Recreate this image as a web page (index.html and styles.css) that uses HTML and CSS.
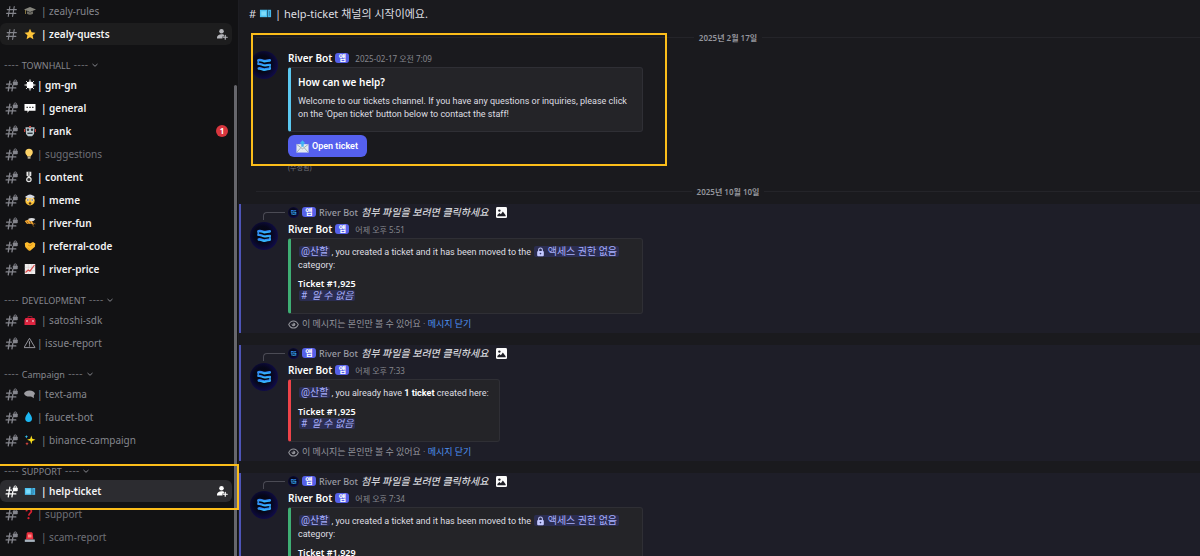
FILE: index.html
```
<!DOCTYPE html>
<html lang="ko">
<head>
    <meta charset="UTF-8">
    <meta name="viewport" content="width=device-width, initial-scale=1.0">
    <title>help-ticket</title>
    <link rel="stylesheet" href="styles.css">
</head>
<body>
    <!-- shared icons -->
    <svg class="sprite" aria-hidden="true">
        <defs>
            <radialGradient id="avatarBg" cx="45%" cy="45%" r="60%">
                <stop offset="0" stop-color="#04050f"/>
                <stop offset="0.5" stop-color="#06071a"/>
                <stop offset="1" stop-color="#110c50"/>
            </radialGradient>
            <linearGradient id="wave" x1="0" y1="0" x2="0" y2="1">
                <stop offset="0" stop-color="#2f86f5"/>
                <stop offset="1" stop-color="#35b4fb"/>
            </linearGradient>
        </defs>
        <symbol id="hash" viewBox="0 0 24 24">
            <path d="M9 3 6 21M17 3l-3 18M4 8.500h17M3 15.500h17" fill="none" stroke="currentColor" stroke-width="2" stroke-linecap="round"/>
        </symbol>
        <symbol id="hash-lock" viewBox="0 0 24 24">
            <path d="M9 4 6 22M14.500 12l-1.700 10M3 9.500h9M2 16.500h18" fill="none" stroke="currentColor" stroke-width="2.400" stroke-linecap="round"/>
            <rect x="14.500" y="4.500" width="9" height="7" rx="1.500" fill="currentColor"/>
            <path d="M16.800 5V3.800a2.200 2.200 0 0 1 4.400 0V5" fill="none" stroke="currentColor" stroke-width="1.600"/>
        </symbol>
        <symbol id="add-user" viewBox="0 0 24 24">
            <circle cx="11" cy="6.500" r="4.500" fill="currentColor"/>
            <path d="M2 21v-2c0-4 4-6.500 9-6.500 1.800 0 3.500.3 4.900 1v3.300h-3V21z" fill="currentColor"/>
            <path d="M18.500 14.500v8M14.500 18.500h8" stroke="currentColor" stroke-width="2.400" stroke-linecap="round"/>
        </symbol>
        <symbol id="chevron" viewBox="0 0 8 8">
            <path d="M1.500 3 4 5.300 6.500 3" fill="none" stroke="currentColor" stroke-width="1"/>
        </symbol>
        <symbol id="avatar" viewBox="0 0 28 28">
            <circle cx="14" cy="14" r="14" fill="url(#avatarBg)"/>
            <g fill="none" stroke="url(#wave)" stroke-linecap="round">
                <path d="M8.500 9.200c2-.8 3.600.2 5.300.8 2 .6 4-.9 6-.6" stroke-width="2.600"/>
                <path d="M8.300 13c2.200-.6 3.400.8 5.400 1.300 2.200.5 4.200-.8 6.300-.4" stroke-width="2.200"/>
                <path d="M8.800 17.500c2-.6 3.300.9 5.200 1.100 2 .2 4-1 5.800-1" stroke-width="2.600"/>
                <path d="M8.200 9.500v3.300M20 14v3.500" stroke-width="1.400"/>
            </g>
        </symbol>
        <symbol id="photo" viewBox="0 0 12 12">
            <rect width="12" height="12" rx="1.500" fill="#fbfbfb"/>
            <circle cx="3.700" cy="3.900" r="1.300" fill="#1e1e26"/>
            <path d="M1.500 10V8.800L3.800 6.600l1.500 1.300 2.200-3.100 3 4.200v1z" fill="#1e1e26"/>
        </symbol>
        <symbol id="lock" viewBox="0 0 10 12">
            <rect x="1" y="4.800" width="8" height="6.400" rx="1.200" fill="#c3c8ff"/>
            <path d="M2.800 5V3.300a2.200 2.200 0 0 1 4.400 0V5" fill="none" stroke="#c3c8ff" stroke-width="1.300"/>
            <circle cx="5" cy="7.900" r="1" fill="#32376b"/>
        </symbol>
        <symbol id="eye" viewBox="0 0 12 12">
            <path d="M.8 6C2 3.400 3.800 2.100 6 2.100S10 3.400 11.200 6C10 8.600 8.200 9.900 6 9.900S2 8.600.8 6z" fill="none" stroke="currentColor" stroke-width="1.100"/>
            <circle cx="6" cy="6" r="2" fill="currentColor"/>
            <circle cx="5.200" cy="5.200" r=".8" fill="#1e1e28"/>
        </symbol>
        <symbol id="ticket" viewBox="0 0 14 12">
            <path d="M1 2.500h8v8H1z" fill="#4fc3f2"/>
            <path d="M9.500 2.500H13v8H9.500z" fill="#48b7ea"/>
            <path d="M2.500 4.200h5v4.600h-5z" fill="#7edcfb"/>
            <path d="M9.300 2.500v8" stroke="#1a6b92" stroke-width=".8" stroke-dasharray="1 1"/>
            <path d="M11.300 4v5" stroke="#1f7ca8" stroke-width=".8"/>
        </symbol>
    </svg>

    <div class="app">
        <nav class="sidebar">
            <div class="group">
                <a class="channel" href="#">
                    <svg class="hash"><use href="#hash"/></svg>
                    <svg class="emoji" viewBox="0 0 12 12"><path d="M6 2 12 4.500 6 7 0 4.500z" fill="#85847c"/><path d="M3 6.200v2.500c2 1.300 4 1.300 6 0V6.200L6 7.500z" fill="#6b6a63"/><path d="M1.500 5v4" stroke="#a08b4a" stroke-width=".8"/></svg>
                    <span class="name">| zealy-rules</span>
                </a>
                <a class="channel unread hover" href="#">
                    <svg class="hash"><use href="#hash"/></svg>
                    <svg class="emoji" viewBox="0 0 12 12"><path d="m6 .8 1.600 3.500 3.900.4-2.900 2.600.8 3.900L6 9.300l-3.400 1.900.8-3.900L.5 4.700l3.900-.4z" fill="#fdc43a"/></svg>
                    <span class="name">| zealy-quests</span>
                    <svg class="invite"><use href="#add-user"/></svg>
                </a>
            </div>

            <div class="group">
                <button class="category"><span class="dash">----</span> TOWNHALL <span class="dash">----</span> <svg><use href="#chevron"/></svg></button>
                <a class="channel unread" href="#">
                    <svg class="hash"><use href="#hash-lock"/></svg>
                    <svg class="emoji narrow" viewBox="0 0 12 12"><circle cx="6" cy="6" r="3.500" fill="#fff"/><path d="M6 .5v11M.5 6h11M2.200 2.200l7.600 7.600M9.800 2.200 2.200 9.800" stroke="#fff" stroke-width="1"/></svg>
                    <span class="name">| gm-gn</span>
                </a>
                <a class="channel unread" href="#">
                    <svg class="hash"><use href="#hash-lock"/></svg>
                    <svg class="emoji" viewBox="0 0 12 12"><path d="M.5 2h11v6.800H5L3.500 11V8.800h-3z" fill="#fff"/><path d="M2.500 5.400h1.400M5.300 5.400h1.400M8.100 5.400h1.400" stroke="#333" stroke-width="1.400"/></svg>
                    <span class="name">| general</span>
                </a>
                <a class="channel unread" href="#">
                    <svg class="hash"><use href="#hash-lock"/></svg>
                    <svg class="emoji" viewBox="0 0 12 12"><path d="M1.500 2.200h9L10 9l-2 2.300H4L2 9z" fill="#b9c6cc"/><path d="M.6 4v3M11.400 4v3" stroke="#d8473e" stroke-width="1"/><circle cx="4" cy="4.800" r="1.200" fill="#273238"/><circle cx="8" cy="4.800" r="1.200" fill="#273238"/><path d="M3.400 8.300h5.200" stroke="#273238" stroke-width="1.300"/><path d="M5 1h2v1.500H5z" fill="#d8473e"/></svg>
                    <span class="name">| rank</span>
                    <span class="badge">1</span>
                </a>
                <a class="channel muted" href="#">
                    <svg class="hash"><use href="#hash-lock"/></svg>
                    <svg class="emoji narrow" viewBox="0 0 12 12"><path d="M5 .7c2.300 0 3.800 1.500 3.800 3.500C8.800 6.400 7 7 6.800 8.500H3.400C3.200 7 1.300 6.400 1.300 4.200 1.300 2.200 2.800.7 5 .7z" fill="#fdd367"/><path d="M3.700 8.500h2.800v2.200H3.700z" fill="#b6ae96"/></svg>
                    <span class="name">| suggestions</span>
                </a>
                <a class="channel unread" href="#">
                    <svg class="hash"><use href="#hash-lock"/></svg>
                    <svg class="emoji narrow" viewBox="0 0 12 12"><path d="M2.500.8h4.800v4L4.900 6.300 2.500 4.800z" fill="#e5e5e5"/><path d="M4.900.8v4" stroke="#333" stroke-width="1"/><circle cx="4.900" cy="8.500" r="2.200" fill="#333" stroke="#e5e5e5" stroke-width="1.200"/></svg>
                    <span class="name">| content</span>
                </a>
                <a class="channel unread" href="#">
                    <svg class="hash"><use href="#hash-lock"/></svg>
                    <svg class="emoji" viewBox="0 0 12 12"><circle cx="6" cy="6.800" r="4.700" fill="#fdc236"/><path d="M1.500 3.500C1 1.500 3.500 2 4 1c1-.8 3-.8 4 0 .8.900 3 .5 2.500 2.500L6 4.500z" fill="#d5d9e4"/><circle cx="3.900" cy="6" r="1.400" fill="#fff"/><circle cx="8.100" cy="6" r="1.400" fill="#fff"/><circle cx="3.900" cy="6" r=".7" fill="#3b2c1c"/><circle cx="8.100" cy="6" r=".7" fill="#3b2c1c"/><ellipse cx="6" cy="9.400" rx="1.300" ry="1.200" fill="#4b301c"/></svg>
                    <span class="name">| meme</span>
                </a>
                <a class="channel unread" href="#">
                    <svg class="hash"><use href="#hash-lock"/></svg>
                    <svg class="emoji" viewBox="0 0 12 12"><path d="M.8 4.200c2-1.700 4.700-2 7-.8L10 8 7.300 6.800 3 7z" fill="#f4a932"/><path d="M4 2c2.500-1.300 5-1.300 7.400 0L9.500 4 6 4.200z" fill="#d9dadd"/><path d="M3 4.500 4.500 7M5.600 3.800 7 6.600M9 6l2.500 1M8 7l2 2.800" stroke="#8b5a20" stroke-width=".9"/></svg>
                    <span class="name">| river-fun</span>
                </a>
                <a class="channel unread" href="#">
                    <svg class="hash"><use href="#hash-lock"/></svg>
                    <svg class="emoji" viewBox="0 0 12 12"><path d="M.8 3.200 3 2l3 1.600L9 2l2.300 1.500-.4 3.300L6.500 10.500c-1 .5-2 0-2.700-.8L1.200 7z" fill="#fdbb2c"/><path d="m4 5 2 .9L8.500 4M3.500 8l2.300 2" stroke="#d88a16" stroke-width=".8" fill="none"/></svg>
                    <span class="name">| referral-code</span>
                </a>
                <a class="channel unread" href="#">
                    <svg class="hash"><use href="#hash-lock"/></svg>
                    <svg class="emoji" viewBox="0 0 12 12"><path d="M.8 1h10.400v10H.8z" fill="#f1eeee"/><path d="M.8 4.300h10.400M.8 7.600h10.400M4.300 1v10M7.700 1v10" stroke="#cfcaca" stroke-width=".5"/><path d="m1.500 9.500 2.700-2.400 1.700 1L10.500 2" fill="none" stroke="#dc4b4b" stroke-width="1.200"/></svg>
                    <span class="name">| river-price</span>
                </a>
            </div>

            <div class="group">
                <button class="category"><span class="dash">----</span> DEVELOPMENT <span class="dash">----</span> <svg><use href="#chevron"/></svg></button>
                <a class="channel" href="#">
                    <svg class="hash"><use href="#hash-lock"/></svg>
                    <svg class="emoji" viewBox="0 0 12 12"><path d="M1.500 4h9L11.500 6v5H.5V6z" fill="#e02440"/><path d="M4 4V2.500h4V4" fill="none" stroke="#8f1629" stroke-width="1"/><path d="M.5 7h11" stroke="#a3142b" stroke-width=".6"/><path d="M3 6v2M9 6v2" stroke="#f0d4d8" stroke-width="1.200"/></svg>
                    <span class="name">| satoshi-sdk</span>
                </a>
                <a class="channel" href="#">
                    <svg class="hash"><use href="#hash-lock"/></svg>
                    <svg class="emoji narrow" viewBox="0 0 12 12"><path d="M5.500 1.300 11 10.600H0z" fill="none" stroke="#94949b" stroke-width="1" stroke-linejoin="round"/><path d="M5.500 4.300v3.400M5.500 8.300v1.200" stroke="#94949b" stroke-width="1.100"/></svg>
                    <span class="name">| issue-report</span>
                </a>
            </div>

            <div class="group">
                <button class="category"><span class="dash">----</span> Campaign <span class="dash">----</span> <svg><use href="#chevron"/></svg></button>
                <a class="channel" href="#">
                    <svg class="hash"><use href="#hash-lock"/></svg>
                    <svg class="emoji narrow" viewBox="0 0 12 12"><ellipse cx="5.500" cy="5.600" rx="5.300" ry="3" fill="#9d9da2"/><path d="M6 7.500 9.800 7v3.300z" fill="#9d9da2"/></svg>
                    <span class="name">| text-ama</span>
                </a>
                <a class="channel" href="#">
                    <svg class="hash"><use href="#hash-lock"/></svg>
                    <svg class="emoji narrow" viewBox="0 0 12 12"><path d="M4.600.8C6.300 3.500 8 5.300 8 7.600a3.400 3.400 0 0 1-6.800 0C1.200 5.300 3 3.500 4.600.8z" fill="#1cb7f2"/></svg>
                    <span class="name">| faucet-bot</span>
                </a>
                <a class="channel" href="#">
                    <svg class="hash"><use href="#hash-lock"/></svg>
                    <svg class="emoji" viewBox="0 0 12 12"><path d="m7.300 1.500 1 3.200 3.200 1.100-3.200 1.100-1 3.300-1-3.300-3.200-1.100 3.200-1.100z" fill="#fbdf1c"/><path d="m2.400 1 .5 1.300 1.300.5-1.300.5-.5 1.300-.5-1.300-1.300-.5 1.300-.5z" fill="#35c2ee"/><path d="m3 8 .5 1.200 1.200.5-1.200.5L3 11.400l-.5-1.200-1.200-.5 1.200-.5z" fill="#ee4c43"/></svg>
                    <span class="name">| binance-campaign</span>
                </a>
            </div>

            <div class="group support">
                <button class="category"><span class="dash">----</span> SUPPORT <span class="dash">----</span> <svg><use href="#chevron"/></svg></button>
                <a class="channel unread selected" href="#">
                    <svg class="hash"><use href="#hash-lock"/></svg>
                    <svg class="emoji"><use href="#ticket"/></svg>
                    <span class="name">| help-ticket</span>
                    <svg class="invite"><use href="#add-user"/></svg>
                </a>
                <a class="channel muted" href="#">
                    <svg class="hash"><use href="#hash-lock"/></svg>
                    <svg class="emoji narrow" viewBox="0 0 12 12"><path d="M2.300 3.300C2.500 1.800 3.600 1 4.900 1c1.500 0 2.500.9 2.500 2.200 0 1.900-2.400 2.100-2.700 4.500" fill="none" stroke="#d8202f" stroke-width="1.700"/><circle cx="4.500" cy="10.200" r="1.100" fill="#d8202f"/></svg>
                    <span class="name">| support</span>
                </a>
                <a class="channel muted" href="#">
                    <svg class="hash"><use href="#hash-lock"/></svg>
                    <svg class="emoji" viewBox="0 0 12 12"><path d="M2 8.500 2.700 2.500c.2-.9.700-1.300 1.500-1.300h3c.8 0 1.300.4 1.500 1.300l.7 6z" fill="#ec2f3f"/><path d="M4 3.500h3.500v3H4z" fill="#ff8b84"/><path d="M.8 8.500h10v2.400H.8z" fill="#a7b4bf"/></svg>
                    <span class="name">| scam-report</span>
                </a>
                <div class="marker"></div>
            </div>
            <div class="scrollbar"></div>
        </nav>

        <main class="chat">
            <p class="intro"># <svg><use href="#ticket"/></svg> | help-ticket 채널의 시작이에요.</p>

            <div class="divider"><span>2025년 2월 17일</span></div>

            <article class="message first">
                <svg class="avatar"><use href="#avatar"/></svg>
                <div class="body">
                    <header class="author"><b>River Bot</b><span class="tag">앱</span><time>2025-02-17 오전 7:09</time></header>
                    <div class="embed cyan">
                        <h3>How can we help?</h3>
                        <p>Welcome to our tickets channel. If you have any questions or inquiries, please click on the 'Open ticket' button below to contact the staff!</p>
                    </div>
                    <button class="open-ticket">
                        <svg viewBox="0 0 14 14"><path d="M.5 4.500h13v9H.5z" fill="#e4eaee"/><path d="m.5 4.500 6.500 5 6.500-5M.5 13.500l4.500-5M13.500 13.500 9 8.500" fill="none" stroke="#8fa3ae" stroke-width=".9"/><path d="M7 .3 10.200 3.700H8.300v3.600H5.700V3.700H3.800z" fill="#41b6f2"/></svg>
                        Open ticket
                    </button>
                    <small class="edited">(수정됨)</small>
                </div>
                <div class="marker"></div>
            </article>

            <div class="divider"><span>2025년 10월 10일</span></div>

            <article class="message mention">
                <div class="reply">
                    <span class="spine"></span>
                    <svg class="mini"><use href="#avatar"/></svg>
                    <span class="tag">앱</span>
                    <b>River Bot</b>
                    <em>첨부 파일을 보려면 클릭하세요</em>
                    <svg class="photo"><use href="#photo"/></svg>
                </div>
                <svg class="avatar"><use href="#avatar"/></svg>
                <div class="body">
                    <header class="author"><b>River Bot</b><span class="tag">앱</span><time>어제 오후 5:51</time></header>
                    <div class="embed green">
                        <p><span class="pill">@산할</span>, you created a ticket and it has been moved to the <span class="pill"><svg><use href="#lock"/></svg> 액세스 권한 없음</span> category:</p>
                        <p class="number">Ticket #1,925</p>
                        <p><span class="pill"># <i>알 수 없음</i></span></p>
                    </div>
                    <footer class="note"><svg><use href="#eye"/></svg><span>이 메시지는 본인만 볼 수 있어요 · <a href="#">메시지 닫기</a></span></footer>
                </div>
            </article>

            <article class="message mention">
                <div class="reply">
                    <span class="spine"></span>
                    <svg class="mini"><use href="#avatar"/></svg>
                    <span class="tag">앱</span>
                    <b>River Bot</b>
                    <em>첨부 파일을 보려면 클릭하세요</em>
                    <svg class="photo"><use href="#photo"/></svg>
                </div>
                <svg class="avatar"><use href="#avatar"/></svg>
                <div class="body">
                    <header class="author"><b>River Bot</b><span class="tag">앱</span><time>어제 오후 7:33</time></header>
                    <div class="embed red">
                        <p><span class="pill">@산할</span>, you already have <strong>1 ticket</strong> created here:</p>
                        <p class="number">Ticket #1,925</p>
                        <p><span class="pill"># <i>알 수 없음</i></span></p>
                    </div>
                    <footer class="note"><svg><use href="#eye"/></svg><span>이 메시지는 본인만 볼 수 있어요 · <a href="#">메시지 닫기</a></span></footer>
                </div>
            </article>

            <article class="message mention">
                <div class="reply">
                    <span class="spine"></span>
                    <svg class="mini"><use href="#avatar"/></svg>
                    <span class="tag">앱</span>
                    <b>River Bot</b>
                    <em>첨부 파일을 보려면 클릭하세요</em>
                    <svg class="photo"><use href="#photo"/></svg>
                </div>
                <svg class="avatar"><use href="#avatar"/></svg>
                <div class="body">
                    <header class="author"><b>River Bot</b><span class="tag">앱</span><time>어제 오후 7:34</time></header>
                    <div class="embed green">
                        <p><span class="pill">@산할</span>, you created a ticket and it has been moved to the <span class="pill"><svg><use href="#lock"/></svg> 액세스 권한 없음</span> category:</p>
                        <p class="number">Ticket #1,929</p>
                    </div>
                </div>
            </article>
        </main>
    </div>
</body>
</html>
```

FILE: styles.css
```
* {
    box-sizing: border-box;
}
body {
    margin: 0;
    background-color: #1a1a1e;
    color: #dfdfe2;
    font-family: "Noto Sans", "Noto Sans CJK KR", sans-serif;
    font-size: 9px;
    line-height: 13px;
}
p, h3 {
    margin: 0;
}
a {
    text-decoration: none;
}
button {
    border: 0;
    font-family: inherit;
    cursor: pointer;
}
.sprite {
    position: absolute;
    width: 0;
    height: 0;
}
.app {
    display: flex;
    height: 100vh;
    overflow: hidden;
}

/* channel list */
.sidebar {
    position: relative;
    flex: 0 0 239px;
    background-color: #121214;
    border-right: 1px solid #1d1d22;
}
.group {
    display: flex;
    flex-direction: column;
    gap: 1px;
    margin-bottom: 12px;
}
.category {
    display: flex;
    align-items: center;
    gap: 3px;
    height: 16px;
    padding: 0 4px;
    background: none;
    color: #85868d;
    font-size: 9px;
}
.dash {
    font-family: Inter, sans-serif;
    font-size: 8px;
}
.category svg {
    width: 8px;
    height: 8px;
}
.channel {
    display: flex;
    align-items: center;
    height: 22px;
    margin-right: 6px;
    padding: 0 4px 0 5px;
    border-radius: 6px;
    color: #85868d;
    font-size: 10px;
}
.channel.unread {
    color: #f3f3f4;
    font-weight: 600;
}
.channel.muted {
    color: #6f7077;
}
.channel.hover {
    background-color: #1d1d1e;
}
.channel.selected {
    background-color: #2c2c30;
}
.hash {
    flex: none;
    width: 13px;
    height: 13px;
    margin-right: 6px;
    color: #85868d;
}
.selected .hash {
    color: #fff;
}
.emoji {
    flex: none;
    width: 12px;
    height: 12px;
    margin-right: 5px;
}
.emoji.narrow {
    margin-right: 1px;
}
.name {
    flex: 1;
}
.invite {
    width: 12px;
    height: 12px;
    color: #b5b6bb;
}
.selected .invite {
    color: #fff;
}
.badge {
    width: 12px;
    height: 12px;
    border-radius: 50%;
    background-color: #d8363e;
    color: #fff;
    font-size: 8px;
    font-weight: 700;
    line-height: 12px;
    text-align: center;
}
.scrollbar {
    position: absolute;
    top: 85px;
    right: 1px;
    bottom: 0;
    width: 3px;
    border-radius: 2px 2px 0 0;
    background-color: #66666c;
}
.marker {
    position: absolute;
    border: 2px solid #fbbd1a;
    pointer-events: none;
}
.support {
    position: relative;
}
.support .marker {
    top: 1px;
    left: -2px;
    right: -1px;
    height: 46px;
    z-index: 1;
}

/* messages */
.chat {
    flex: 1;
    min-width: 0;
}
.intro {
    display: flex;
    align-items: center;
    gap: 3px;
    height: 26px;
    padding-left: 10px;
    font-size: 11px;
}
.intro svg {
    width: 13px;
    height: 12px;
}
.divider {
    display: flex;
    align-items: center;
    gap: 5px;
    height: 22px;
    margin-left: 17px;
    color: #94959c;
    font-size: 8px;
    font-weight: 600;
}
.divider::before, .divider::after {
    content: "";
    flex: 1;
    height: 1px;
    background-color: #242429;
}
.message {
    display: grid;
    grid-template-columns: 28px 1fr;
    column-gap: 10px;
    margin: 2px 0 12px;
    padding: 0 0 2px 9px;
    border-left: 2px solid transparent;
}
.message.first {
    position: relative;
    margin: 1px 0 3px;
}
.first .marker {
    top: -16px;
    left: 10px;
    width: 416px;
    height: 133px;
}
.mention {
    background-color: #1e1e28;
    border-left-color: #4e55b8;
}
.reply {
    grid-column: 1 / -1;
    display: flex;
    align-items: center;
    gap: 3px;
    height: 16px;
    padding-left: 13px;
    color: #9a9ba3;
}
.spine {
    align-self: flex-end;
    width: 22px;
    height: 8px;
    border: solid #4b4b55;
    border-width: 1px 0 0 1px;
    border-top-left-radius: 4px;
}
.mini {
    width: 11px;
    height: 11px;
}
.reply b {
    font-weight: 500;
}
.reply em {
    color: #d4d5da;
    font-size: 10px;
    font-weight: 500;
}
.photo {
    width: 11px;
    height: 11px;
    margin-left: 5px;
}
.avatar {
    width: 28px;
    height: 28px;
    margin-top: 2px;
}
.author {
    display: flex;
    align-items: center;
    height: 18px;
}
.author b {
    color: #fff;
    font-size: 10px;
    font-weight: 600;
}
.author time {
    color: #85868d;
    font-size: 8px;
}
.tag {
    width: 14px;
    height: 10px;
    border-radius: 3px;
    background-color: #5560e8;
    color: #fff;
    font-size: 8px;
    font-weight: 700;
    line-height: 10px;
    text-align: center;
}
.author .tag {
    margin: 0 6px 0 3px;
}
.embed {
    width: fit-content;
    max-width: 355px;
    padding: 7px 10px 10px 7px;
    background-color: #242428;
    border: 1px solid #2f2f35;
    border-left-width: 3px;
    border-radius: 3px;
    font-family: Roboto, "Noto Sans CJK KR", sans-serif;
}
.embed.cyan {
    border-left-color: #5bc8f0;
}
.embed.green {
    border-left-color: #3fae74;
}
.embed.red {
    border-left-color: #ee4349;
}
.embed h3 {
    margin-bottom: 6px;
    color: #fff;
    font-family: "Noto Sans", sans-serif;
    font-size: 10px;
    font-weight: 600;
    line-height: 14px;
}
.embed strong {
    color: #fff;
}
.embed .number {
    margin-top: 5px;
    color: #fff;
    font-family: "Noto Sans", sans-serif;
    font-weight: 600;
}
.pill {
    margin: 0 1px;
    padding: 0 2px;
    border-radius: 2px;
    background-color: #2b2d51;
    color: #a6aefb;
    font-size: 10px;
    line-height: 12px;
}
.pill i {
    margin-left: 2px;
}
.pill svg {
    width: 9px;
    height: 10px;
    vertical-align: -2px;
}
.open-ticket {
    display: flex;
    align-items: center;
    gap: 3px;
    height: 22px;
    margin-top: 3px;
    padding: 0 9px 0 8px;
    border-radius: 6px;
    background-color: #5560ee;
    color: #fff;
    font-family: Roboto, sans-serif;
    font-size: 9px;
    font-weight: 600;
}
.open-ticket svg {
    width: 13px;
    height: 13px;
}
.edited {
    display: block;
    height: 14px;
    margin-top: 4px;
    color: #6f7077;
    font-size: 7px;
}
.note {
    display: flex;
    align-items: center;
    gap: 3px;
    height: 14px;
    margin-top: 3px;
    color: #94959c;
    font-family: Roboto, "Noto Sans CJK KR", sans-serif;
}
.note svg {
    width: 11px;
    height: 11px;
}
.note a {
    color: #4d91f0;
}
```
